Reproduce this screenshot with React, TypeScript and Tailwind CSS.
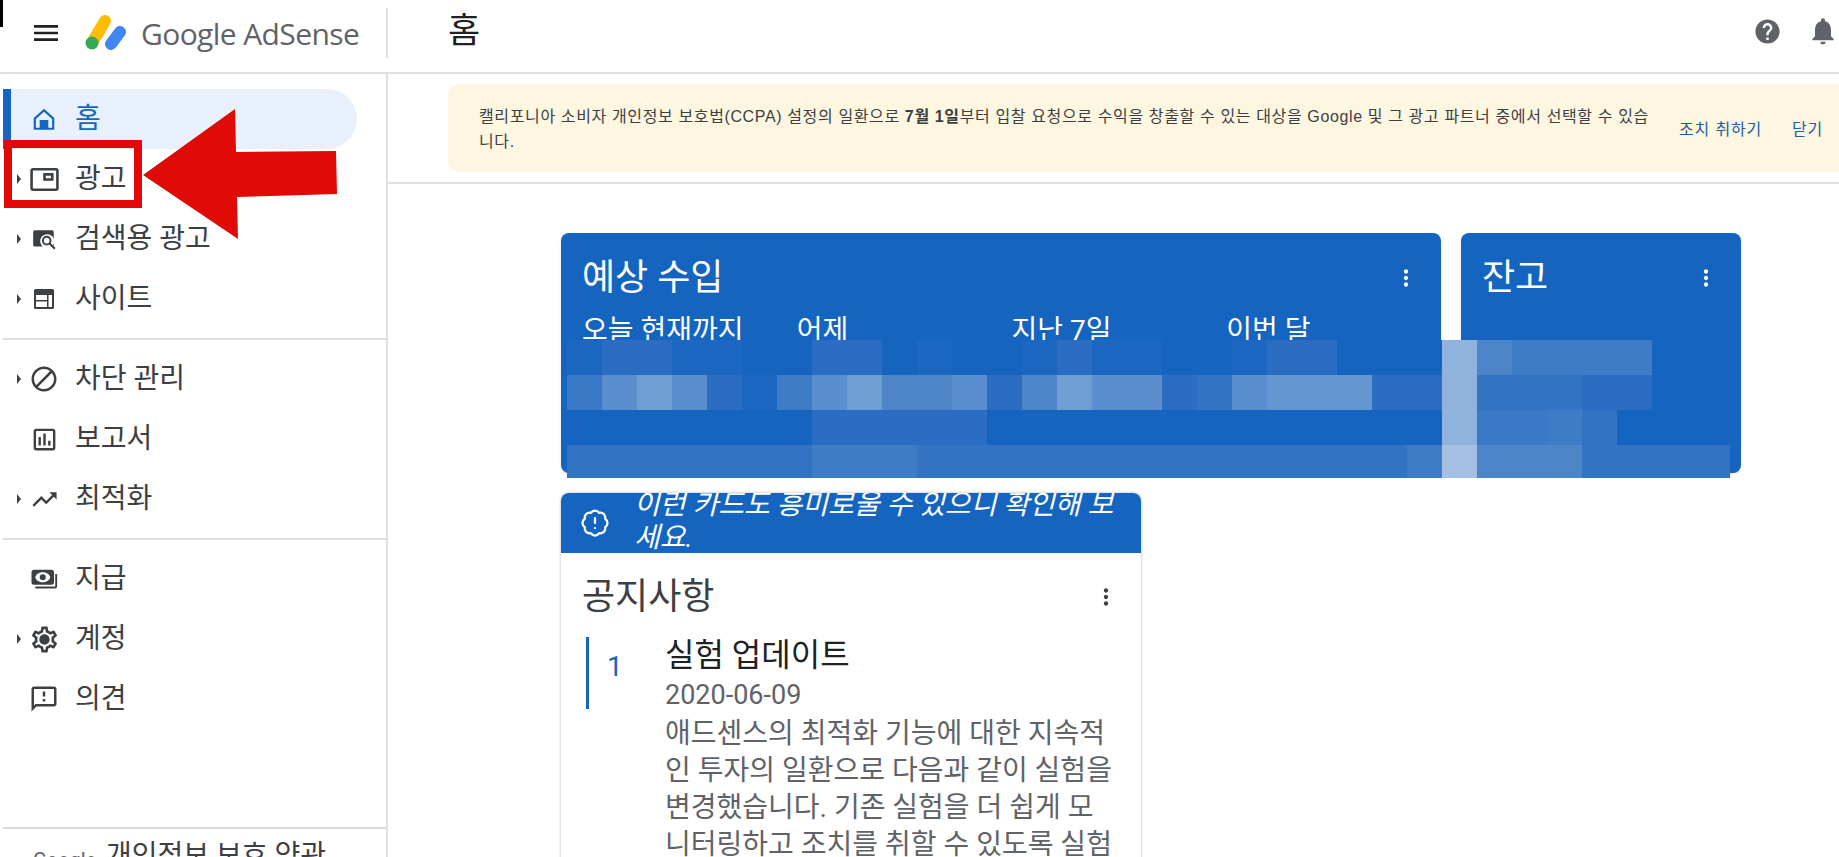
import React from "react";
import {
  MdHelp,
  MdMenu,
  MdMoreVert,
  MdNotifications,
  MdOutlineAssessment,
  MdOutlineBlock,
  MdOutlineFeedback,
  MdOutlinePictureInPicture,
  MdOutlineSettings,
  MdTrendingUp,
} from "react-icons/md";
import { BadgeAlert } from "lucide-react";

const BASE = "#1565c0";

// mosaic that hides the amounts, one string per row, one colour per 35px cell
const c: Record<string, string> = {
  _: BASE,
  a: "#1b67c1",
  b: "#2a6dc3",
  d: "#3373c3",
  e: "#3f7cc6",
  f: "#4d85c8",
  g: "#5a8ecf",
  h: "#6f9ed3",
  i: "#6497d1",
  j: "#8fb3dd",
  k: "#a3bfe2",
  l: "#3a79c6",
};

const mosaic = [
  "abbaa__bb_a__abaa__abb___jfeeee___",
  "lghgbaeghffgbfhggbdgiiibbjdddbb___",
  "_______bbbbb_____________jlled____",
  "dddddddeeeddddddddddddddekfffddddd",
];

const SearchAdIcon = () => (
  <svg width="26" height="26" viewBox="0 0 24 24">
    <rect x="2" y="4" width="19" height="15" rx="1.5" fill="#3c4043" />
    <circle cx="15" cy="14" r="6.5" fill="#fff" />
    <circle cx="14.5" cy="13.5" r="3.5" fill="none" stroke="#3c4043" strokeWidth="1.8" />
    <path d="M17 16l5 5" stroke="#3c4043" strokeWidth="2" />
  </svg>
);

const SiteIcon = () => (
  <svg width="24" height="24" viewBox="0 0 24 24">
    <path
      fillRule="evenodd"
      d="M3.5 2h17A1.5 1.5 0 0 1 22 3.5v17a1.5 1.5 0 0 1-1.500 1.500h-17A1.500 1.500 0 0 1 2 20.500v-17A1.500 1.500 0 0 1 3.500 2zM4 8v5h11V8zM4 14.500V20h11v-5.500zM16.500 8v12H20V8z"
      fill="#3c4043"
    />
  </svg>
);

const HomeIcon = () => (
  <svg width="26" height="26" viewBox="0 0 24 24" fill={BASE}>
    <path d="M12 2.500 2.500 11v11h19V11zM19.500 20h-3.500v-7H8v7H4.500v-8.100L12 5.200l7.500 6.700z" />
  </svg>
);

const PaymentsIcon = () => (
  <svg width="30" height="30" viewBox="0 0 24 24" fill="#3c4043">
    <path
      fillRule="evenodd"
      d="M4 4.500h14a2 2 0 0 1 2 2v8a2 2 0 0 1-2 2H4a2 2 0 0 1-2-2v-8a2 2 0 0 1 2-2zM11 6.500c-3.500 0-5.500 2-6 4 .5 2 2.500 4 6 4s5.500-2 6-4c-.5-2-2.500-4-6-4z"
    />
    <circle cx="11" cy="10.500" r="2.400" />
    <path d="M21 8h1.500v9.500a2 2 0 0 1-2 2H5V18h16z" />
  </svg>
);

const SettingsIcon = () => (
  <span className="relative flex items-center justify-center">
    <MdOutlineSettings size={31} color="#3c4043" />
    <span className="absolute h-[8px] w-[8px] rounded-full bg-[#3c4043]" />
  </span>
);

const Caret = ({ show }: { show: boolean }) => (
  <span className="flex w-[15px] shrink-0">
    {show && <span className="border-y-[5px] border-l-[4px] border-y-transparent border-l-[#3c4043]" />}
  </span>
);

const NavItem = ({
  icon,
  label,
  caret = false,
  active = false,
}: {
  icon: React.ReactNode;
  label: string;
  caret?: boolean;
  active?: boolean;
}) => (
  <div
    className={
      active
        ? "flex h-[60px] w-[354px] items-center rounded-r-full border-l-[8px] border-[#1565c0] bg-[#e8f0fb] pl-[6px] text-[#1565c0]"
        : "flex h-[60px] items-center pl-[14px] text-[#3c4043]"
    }
  >
    <Caret show={caret} />
    <span className="-mx-[4px] flex w-[32px] shrink-0 items-center justify-center">{icon}</span>
    <span className="mb-[1px] ml-[19px] whitespace-nowrap text-[28px] leading-none">{label}</span>
  </div>
);

const Sidebar = () => (
  <aside className="flex w-[388px] shrink-0 flex-col border-r-2 border-[#e0e0e0] pt-[15px]">
    <div className="ml-[3px]">
      <NavItem active icon={<HomeIcon />} label="홈" />
      <NavItem caret icon={<MdOutlinePictureInPicture size={31} color="#3c4043" />} label="광고" />
      <NavItem caret icon={<SearchAdIcon />} label="검색용 광고" />
      <NavItem caret icon={<SiteIcon />} label="사이트" />
    </div>
    <div className="mt-[9px] ml-[3px] border-t-2 border-[#dadce0] pt-[9px]">
      <NavItem caret icon={<MdOutlineBlock size={30} color="#3c4043" />} label="차단 관리" />
      <NavItem icon={<MdOutlineAssessment size={29} color="#3c4043" />} label="보고서" />
      <NavItem caret icon={<MdTrendingUp size={29} color="#3c4043" />} label="최적화" />
    </div>
    <div className="mt-[9px] ml-[3px] border-t-2 border-[#dadce0] pt-[9px]">
      <NavItem icon={<PaymentsIcon />} label="지급" />
      <NavItem caret icon={<SettingsIcon />} label="계정" />
      <NavItem icon={<MdOutlineFeedback size={30} color="#3c4043" />} label="의견" />
    </div>
    <div className="mt-auto ml-[3px] flex h-[30px] items-start overflow-hidden border-t-2 border-[#dadce0] pl-[30px] text-[#5f6368]">
      <span className="mt-[21px] w-[73px] text-[20px] leading-none">Google</span>
      <span className="mt-[13px] whitespace-nowrap text-[28px] leading-none text-[#3c4043]">개인정보 보호 약관</span>
    </div>
  </aside>
);

const Logo = () => (
  <svg width="44" height="38" viewBox="0 0 44 38" className="shrink-0">
    <path d="M21 7 8 29" stroke="#fbbc04" strokeWidth="12" strokeLinecap="round" />
    <circle cx="8" cy="29" r="6.500" fill="#34a853" />
    <path d="M36 18 27 30" stroke="#4285f4" strokeWidth="12" strokeLinecap="round" />
  </svg>
);

const Header = () => (
  <header className="flex h-[74px] shrink-0 items-center border-b-2 border-[#e0e0e0]">
    <div className="mt-[8px] flex h-[50px] w-[388px] shrink-0 items-center self-start border-r-2 border-[#e0e0e0] pl-[30px]">
      <MdMenu size={32} color="#202124" />
      <span className="ml-[22px]">
        <Logo />
      </span>
      <span className="mt-[2px] ml-[13px] whitespace-nowrap font-['Open_Sans',sans-serif] text-[30px] leading-none tracking-[-0.6px] text-[#5f6368]">
        Google AdSense
      </span>
    </div>
    <h1 className="ml-[60px] pb-[10px] text-[35px] leading-none text-[#202124]">홈</h1>
    <div className="ml-auto flex items-center gap-[25px] pb-[10px]">
      <MdHelp size={29} color="#5f6368" />
      <MdNotifications size={32} color="#5f6368" />
    </div>
  </header>
);

const Banner = () => (
  <div className="border-b-2 border-[#e0e0e0] py-[10px] pl-[60px]">
    <div className="flex h-[88px] rounded-l-[10px] bg-[#fdf6e0] pl-[31px]">
      <p className="mt-[20px] whitespace-nowrap font-['Liberation_Sans','Noto_Sans_CJK_KR',sans-serif] text-[16px] leading-[25px] tracking-[0.63px] text-[#3c4043]">
        캘리포니아 소비자 개인정보 보호법(CCPA) 설정의 일환으로 <b>7월 1일</b>부터 입찰 요청으로 수익을 창출할 수 있는 대상을 Google 및 그 광고 파트너 중에서 선택할 수 있습
        <br />
        니다.
      </p>
      <div className="ml-auto flex items-center gap-[30px] pr-[16px] pt-[4px] font-['Liberation_Sans','Noto_Sans_CJK_KR',sans-serif] text-[16px] tracking-[0.8px] text-[#1a5f9e]">
        <span>조치 취하기</span>
        <span>닫기</span>
      </div>
    </div>
  </div>
);

const CardTitle = ({ title }: { title: string }) => (
  <div className="flex items-center justify-between pt-[26px] pl-[21px] pr-[22px]">
    <span className="text-[36px] leading-[38px]">{title}</span>
    <MdMoreVert size={26} className="-mt-[1px]" />
  </div>
);

const Mosaic = () => (
  <div className="absolute top-[107px] left-[6px] grid w-[1163px] grid-cols-[repeat(33,35px)_8px] grid-rows-[35px_35px_35px_33px]">
    {mosaic.map((row, y) =>
      row.split("").map((key, x) => (
        <div key={`${y}-${x}`} style={{ background: c[key] }} />
      ))
    )}
  </div>
);

const Notice = () => (
  <div className="mt-[20px] w-[580px] overflow-hidden rounded-t-[8px] shadow-[0_0_3px_rgba(0,0,0,0.3)]">
    <div className="flex h-[60px] items-center overflow-hidden bg-[#1565c0] text-white">
      <span className="ml-[20px] flex w-[28px] shrink-0 justify-center">
        <BadgeAlert size={30} strokeWidth={1.8} className="shrink-0" />
      </span>
      <p className="mb-[5px] ml-[25px] w-[490px] text-[28px] leading-[33px] whitespace-nowrap italic">
        이런 카드도 흥미로울 수 있으니 확인해 보<br />
        세요.
      </p>
    </div>
    <div className="flex items-center justify-between pt-[24px] pl-[21px] pr-[22px] text-[#3c4043]">
      <span className="text-[36px] leading-[40px]">공지사항</span>
      <MdMoreVert size={26} />
    </div>
    <div className="mt-[20px] flex pl-[25px]">
      <div className="h-[72px] w-[3px] shrink-0 bg-[#1565c0]" />
      <div className="ml-[18px] w-[58px] shrink-0 pt-[10px] text-[28px] leading-[40px] text-[#1565c0]">1</div>
      <div className="min-w-0">
        <h2 className="-mt-[2px] text-[32px] leading-[40px] text-[#202124]">실험 업데이트</h2>
        <p className="mt-[2px] text-[27px] leading-[37px] text-[#5f6368]">2020-06-09</p>
        <p className="mt-[1px] whitespace-nowrap text-[28px] leading-[37px] text-[#5f6368]">
          애드센스의 최적화 기능에 대한 지속적
          <br />
          인 투자의 일환으로 다음과 같이 실험을
          <br />
          변경했습니다. 기존 실험을 더 쉽게 모
          <br />
          니터링하고 조치를 취할 수 있도록 실험
        </p>
      </div>
    </div>
  </div>
);

const App = () => {
  return (
    <div className="relative flex h-[857px] w-full flex-col overflow-hidden bg-white font-['Roboto','Noto_Sans_CJK_KR',sans-serif]">
      <Header />
      <div className="flex min-h-0 flex-1">
        <Sidebar />
        <main className="min-w-0 flex-1 overflow-hidden">
          <Banner />
          <div className="pt-[49px] pl-[173px]">
            <div className="relative flex gap-[20px]">
              <section className="h-[240px] w-[880px] overflow-hidden rounded-[8px] bg-[#1565c0] text-white shadow-sm">
                <CardTitle title="예상 수입" />
                <div className="mt-[20px] grid grid-cols-4 pl-[21px] text-[28px] leading-none whitespace-nowrap">
                  <span>오늘 현재까지</span>
                  <span>어제</span>
                  <span>지난 7일</span>
                  <span>이번 달</span>
                </div>
              </section>
              <section className="h-[240px] w-[280px] overflow-hidden rounded-[8px] bg-[#1565c0] text-white shadow-sm">
                <CardTitle title="잔고" />
              </section>
              <Mosaic />
            </div>
            <Notice />
          </div>
        </main>
      </div>

      <div className="absolute top-0 left-0 h-[27px] w-[3px] bg-black" />
      <div className="absolute top-[140px] left-[4px] h-[68px] w-[138px] border-[8px] border-[#e30808]" />
      <svg className="absolute top-[105px] left-[140px]" width="200" height="140" viewBox="140 105 200 140">
        <polygon points="143,175 235,109 236,152 336,151 337,194 237,197 238,239" fill="#e00a06" />
      </svg>
    </div>
  );
};

export default App;
